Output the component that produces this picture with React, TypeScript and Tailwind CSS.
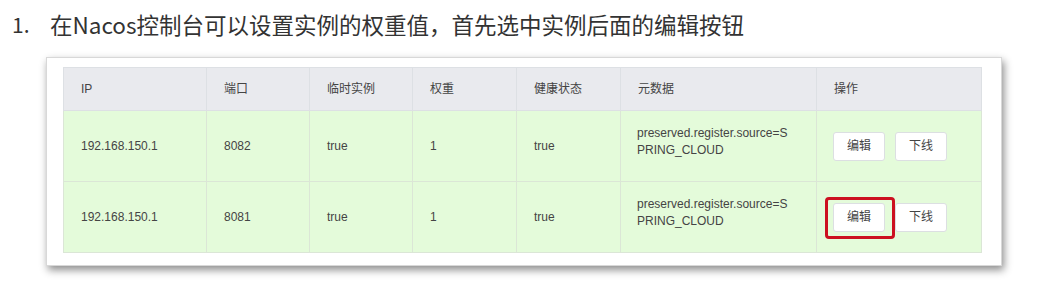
import React from 'react';

const cols = [
  { label: 'IP', w: 'w-[143px]' },
  { label: '端口', w: 'w-[103px]' },
  { label: '临时实例', w: 'w-[103px]' },
  { label: '权重', w: 'w-[104px]' },
  { label: '健康状态', w: 'w-[104px]' },
  { label: '元数据', w: 'w-[196px]' },
  { label: '操作', w: 'w-[165px]' },
];

const rows = [
  { ip: '192.168.150.1', port: '8082', ephemeral: 'true', weight: '1', healthy: 'true', highlight: false },
  { ip: '192.168.150.1', port: '8081', ephemeral: 'true', weight: '1', healthy: 'true', highlight: true },
];

function Btn({ children }: { children: React.ReactNode }) {
  return (
    <button className="w-[52px] h-[29px] bg-white border border-[#dcdfe2] rounded-[3px] text-[12px] text-[#444]">
      {children}
    </button>
  );
}

export default function App() {
  return (
    <div className="w-[1043px] h-[284px] bg-white overflow-hidden" style={{ fontFamily: '"Liberation Sans", "Noto Sans CJK SC", sans-serif' }}>
      {/* step title */}
      <div
        className="flex items-center h-[40px] pt-[9px] pl-[12px] text-[#333] text-[22.5px] leading-none"
        style={{ fontFamily: '"Noto Sans CJK SC", sans-serif' }}
      >
        <span className="w-[38px] text-[21px]">1.</span>
        <span>在Nacos控制台可以设置实例的权重值，首先选中实例后面的编辑按钮</span>
      </div>

      {/* screenshot card */}
      <div className="ml-[46px] mt-[17px] w-[956px] h-[209px] bg-white border border-[#d8d8d8] shadow-[2px_4px_8px_rgba(0,0,0,0.45)] pt-[9px] pl-[16px]">
        <table className="table-fixed border-collapse w-[918px] text-[12px] text-[#444]">
          <thead>
            <tr className="h-[43px] bg-[#e9eaee]">
              {cols.map((c) => (
                <th key={c.label} className={`${c.w} border border-[#dde0e4] text-left font-normal pl-[17px]`}>
                  {c.label}
                </th>
              ))}
            </tr>
          </thead>
          <tbody>
            {rows.map((r, i) => (
              <tr key={i} className="h-[71px] bg-[#e4fbda]">
                <td className="border border-[#dbe6d6] pl-[17px]">{r.ip}</td>
                <td className="border border-[#dbe6d6] pl-[17px]">{r.port}</td>
                <td className="border border-[#dbe6d6] pl-[17px]">{r.ephemeral}</td>
                <td className="border border-[#dbe6d6] pl-[17px]">{r.weight}</td>
                <td className="border border-[#dbe6d6] pl-[17px]">{r.healthy}</td>
                <td className="border border-[#dbe6d6] pl-[16px] pb-[9px] leading-[17px]">
                  <div>preserved.register.source=S</div>
                  <div>PRING_CLOUD</div>
                </td>
                <td className="border border-[#dbe6d6] pl-[16px]">
                  <div className="flex items-center gap-[10px]">
                    <div className="relative">
                      <Btn>编辑</Btn>
                      {r.highlight && (
                        <div className="absolute -left-[8px] -top-[6px] w-[70px] h-[42px] border-[3px] border-[#cc1020] rounded-[4px]" />
                      )}
                    </div>
                    <Btn>下线</Btn>
                  </div>
                </td>
              </tr>
            ))}
          </tbody>
        </table>
      </div>
    </div>
  );
}
